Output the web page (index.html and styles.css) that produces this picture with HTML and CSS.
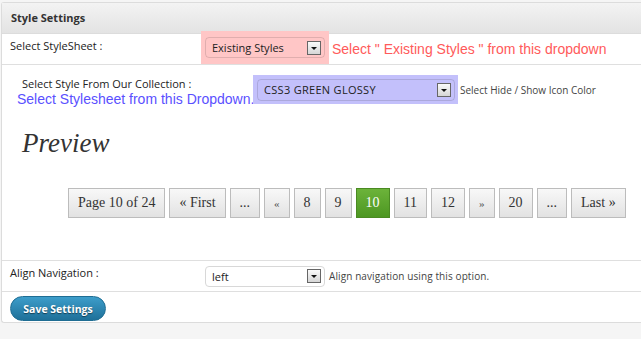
FILE: index.html
```html
<html lang="en">
  <head>
    <meta charset="UTF-8" />
    <meta name="viewport" content="width=device-width, initial-scale=1.0" />
    <title>Style Settings</title>
    <link rel="stylesheet" href="styles.css">
  </head>
  <body>
    <div class="panel">
      <div class="panel-head">Style Settings</div>

      <div class="row row-first">
        <div class="label">Select StyleSheet :</div>
        <div class="field">
          <span class="mark mark-red">
            <span class="dropdown dropdown-small">
              <span class="dropdown-text">Existing Styles</span>
              <span class="arrow"></span>
            </span>
          </span>
          <span class="hint-red">Select " Existing Styles " from this dropdown</span>
        </div>
      </div>

      <div class="collection">
        <div class="collection-row">
          <div class="collection-label">
            <div class="label-sub">Select Style From Our Collection :</div>
            <div class="hint-blue">Select Stylesheet from this Dropdown.</div>
          </div>
          <div class="collection-field">
            <span class="mark mark-blue">
              <span class="dropdown dropdown-wide">
                <span class="dropdown-text caps">CSS3 GREEN GLOSSY</span>
                <span class="arrow"></span>
              </span>
            </span>
            <span class="note">Select Hide / Show Icon Color</span>
          </div>
        </div>

        <h2 class="preview">Preview</h2>

        <div class="pager">
          <span class="page-btn">Page 10 of 24</span>
          <span class="page-btn">&laquo; First</span>
          <span class="page-btn">...</span>
          <span class="page-btn small">&laquo;</span>
          <span class="page-btn">8</span>
          <span class="page-btn">9</span>
          <span class="page-btn current">10</span>
          <span class="page-btn">11</span>
          <span class="page-btn">12</span>
          <span class="page-btn small">&raquo;</span>
          <span class="page-btn">20</span>
          <span class="page-btn">...</span>
          <span class="page-btn">Last &raquo;</span>
        </div>
      </div>

      <div class="row row-align">
        <div class="label">Align Navigation :</div>
        <div class="field">
          <span class="dropdown dropdown-small plain">
            <span class="dropdown-text">left</span>
            <span class="arrow"></span>
          </span>
          <span class="note note-align">Align navigation using this option.</span>
        </div>
      </div>

      <div class="actions">
        <button class="save-btn" type="button">Save Settings</button>
      </div>
    </div>
  </body>
</html>
```

FILE: styles.css
```css
body {
  font-family: "Open Sans", "DejaVu Sans", sans-serif;
  background-color: #f5f5f5;
  margin: 0;
  padding: 2px 0 0 1px;
  color: #333;
}
.panel {
  background-color: white;
  border: 1px solid #dcdcdc;
  border-right: none;
  border-radius: 3px 0 0 3px;
  height: 321px;
  box-sizing: border-box;
}
.panel-head {
  height: 30px;
  line-height: 30px;
  padding-left: 9px;
  font-size: 11px;
  font-weight: bold;
  color: #333;
  background: linear-gradient(#f3f3f3, #e3e3e3);
  border-bottom: 1px solid #dcdcdc;
}
.row {
  display: flex;
  align-items: center;
  height: 30px;
  border-bottom: 1px solid #dfdfdf;
}
.label {
  width: 191px;
  padding-left: 8px;
  padding-top: 4px;
  align-self: flex-start;
  font-size: 11px;
  color: #222;
}
.field {
  display: flex;
  align-items: center;
}
.mark {
  display: inline-flex;
  align-items: center;
}
.mark-red {
  background-color: #ffc6c6;
  height: 33px;
  margin-top: -3px;
  padding: 0 4px;
}
.mark-blue {
  background-color: #c3c0fb;
  height: 29px;
  padding: 0 3px 0 4px;
}
.dropdown {
  display: inline-flex;
  align-items: center;
  justify-content: space-between;
  height: 21px;
  box-sizing: border-box;
  border: 1px solid rgba(0, 0, 0, 0.12);
  border-radius: 4px;
  padding: 0 3px 0 6px;
  font-size: 11px;
  color: #222;
}
.dropdown-small {
  width: 120px;
}
.dropdown-wide {
  width: 198px;
  height: 22px;
}
.plain {
  margin-left: 4px;
  border-color: #d8d8d8;
  background-color: white;
}
.caps {
  letter-spacing: 0.3px;
}
.arrow {
  position: relative;
  width: 14px;
  height: 14px;
  box-sizing: border-box;
  border: 1px solid #666;
  background: linear-gradient(#fafafa, #d6d6d6);
}
.arrow::after {
  content: "";
  position: absolute;
  left: 3px;
  top: 5px;
  border-left: 3px solid transparent;
  border-right: 3px solid transparent;
  border-top: 3px solid #111;
}
.hint-red {
  margin-left: 3px;
  font-family: "Liberation Sans", Arial, sans-serif;
  font-size: 14px;
  color: #ff5a5a;
  white-space: nowrap;
}
.collection {
  height: 195px;
  border-bottom: 1px solid #dfdfdf;
}
.collection-row {
  display: flex;
  align-items: flex-start;
  padding-top: 11px;
}
.collection-label {
  width: 236px;
  padding-left: 15px;
  white-space: nowrap;
}
.label-sub {
  padding-left: 5px;
  font-size: 11px;
  line-height: 16px;
  color: #222;
}
.hint-blue {
  font-family: "Liberation Sans", Arial, sans-serif;
  font-size: 14px;
  line-height: 15px;
  color: #5a50ff;
}
.collection-field {
  display: flex;
  align-items: center;
  margin-top: -1px;
}
.note {
  margin-left: 2px;
  font-size: 10px;
  color: #444;
  white-space: nowrap;
}
.note-align {
  margin-left: 4px;
  letter-spacing: 0.1px;
}
.preview {
  margin: 21px 0 0 20px;
  font-family: "Liberation Serif", "DejaVu Serif", serif;
  font-style: italic;
  font-weight: normal;
  font-size: 27px;
  color: #333;
}
.pager {
  display: flex;
  gap: 4px;
  padding: 29px 0 0 66px;
}
.page-btn {
  height: 30px;
  line-height: 28px;
  box-sizing: border-box;
  padding: 0 9px;
  border: 1px solid #bcbcbc;
  background: linear-gradient(#f8f8f8, #e2e2e2);
  font-family: "Liberation Serif", "DejaVu Serif", serif;
  font-size: 14px;
  color: #333;
}
.page-btn.small {
  font-size: 11px;
  color: #555;
}
.page-btn.current {
  background: linear-gradient(#6cb33a, #4d9722);
  border-color: #4a8a22;
  color: white;
}
.actions {
  padding: 4px 0 0 8px;
}
.save-btn {
  width: 96px;
  height: 25px;
  padding: 0;
  border: 1px solid #1f6d93;
  border-radius: 13px;
  background: linear-gradient(#3d9dca, #1e7099);
  color: white;
  font-family: "Open Sans", sans-serif;
  font-size: 10.5px;
  font-weight: bold;
  white-space: nowrap;
  text-shadow: 0 1px 1px rgba(0, 0, 0, 0.5);
  cursor: pointer;
}
```
